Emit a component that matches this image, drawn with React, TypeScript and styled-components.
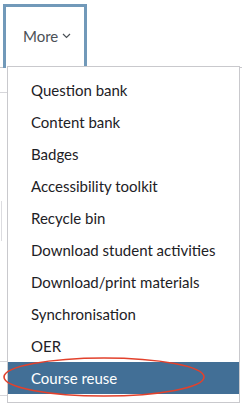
import styled, { createGlobalStyle } from "styled-components";

const Global = createGlobalStyle`
  html, body {
    margin: 0;
    padding: 0;
    background: #fff;
  }
  body {
    font-family: "Lato", "Open Sans", sans-serif;
    color: #1d2125;
  }
`;

const items = [
  "Question bank",
  "Content bank",
  "Badges",
  "Accessibility toolkit",
  "Recycle bin",
  "Download student activities",
  "Download/print materials",
  "Synchronisation",
  "OER",
  "Course reuse",
];

const Page = styled.div`
  position: relative;
  width: 242px;
  height: 406px;
  overflow: hidden;
`;

const NavBar = styled.div`
  display: flex;
  padding: 4px 0 0 3px;
  border-bottom: 1px solid #c8c8cc;
  height: 63px;
`;

const Tab = styled.div`
  display: flex;
  align-items: center;
  gap: 4px;
  box-sizing: border-box;
  width: 84px;
  height: 64px;
  padding: 0 0 4px 17px;
  border: 3px solid #7199b9;
  border-bottom: none;
  background: #fff;
  color: #4b5157;
  font-size: 15px;
`;

const Content = styled.div`
  display: flex;
  flex-direction: column;
  padding-top: 24px;
`;

const SideLine = styled.div<{ $gap: number }>`
  width: 8px;
  margin-top: ${(p) => p.$gap}px;
  border-top: 1px solid #d6d6da;
`;

const SideBar = styled.div`
  width: 0;
  height: 40px;
  margin: 108px 0 0 1px;
  border-left: 1px solid #dcdce0;
`;

const Menu = styled.ul`
  position: absolute;
  left: 7px;
  top: 66px;
  width: 233px;
  box-sizing: border-box;
  margin: 0;
  padding: 7px 0 8px;
  list-style: none;
  background: #fff;
  border: 1px solid #c9c9cd;
`;

const Item = styled.li<{ $active?: boolean }>`
  height: 32px;
  display: flex;
  align-items: center;
  padding-left: 23px;
  font-size: 15px;
  white-space: nowrap;
  background: ${(p) => (p.$active ? "#426f96" : "transparent")};
  color: ${(p) => (p.$active ? "#fff" : "#1d2125")};
`;

const Ring = styled.svg`
  position: absolute;
  left: 0;
  top: 354px;
  pointer-events: none;
`;

const Chevron = () => (
  <svg width="9" height="6" viewBox="0 0 9 6" fill="none">
    <path d="M1 1l3.5 3.5L8 1" stroke="#4b5157" strokeWidth="1.2" />
  </svg>
);

export default function App() {
  return (
    <Page>
      <Global />
      <NavBar>
        <Tab>
          More <Chevron />
        </Tab>
      </NavBar>
      <Content>
        <SideLine $gap={0} />
        <SideBar />
        <SideLine $gap={120} />
        <SideLine $gap={33} />
      </Content>
      <Menu>
        {items.map((t, i) => (
          <Item key={t} $active={i === items.length - 1}>
            {t}
          </Item>
        ))}
      </Menu>
      <Ring width="210" height="48" viewBox="0 0 210 48">
        <ellipse cx="104" cy="23" rx="100" ry="19" fill="none" stroke="#e2412c" strokeWidth="1.6" />
      </Ring>
    </Page>
  );
}
